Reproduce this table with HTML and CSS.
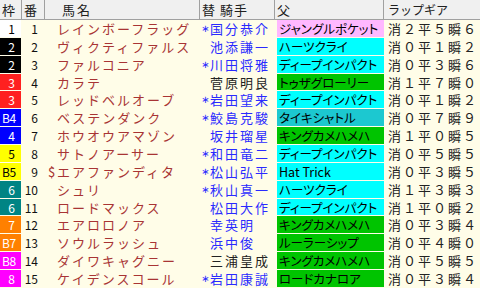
FILE: index.html
```html
<!DOCTYPE html>
<html lang="ja">
<head>
<meta charset="utf-8">
<link rel="stylesheet" href="styles.css">
</head>
<body>
<div class="table">
  <div class="row head">
    <div class="h">枠</div>
    <div class="h">番</div>
    <div class="h h-name">馬名</div>
    <div class="h h-jockey">替 騎手</div>
    <div class="h">父</div>
    <div class="h h-lap">ラップギア</div>
  </div>

  <div class="row"><div class="waku w1">1</div><div class="num">1</div><div class="name"><span class="mk"></span>レインボーフラッグ</div><div class="jockey"><span class="mk">∗</span>国分恭介</div><div class="sire s-pink"><span>ジャングルポケット</span></div><div class="lap">消２平５瞬６</div></div>
  <div class="row"><div class="waku w2">2</div><div class="num">2</div><div class="name"><span class="mk"></span>ヴィクティファルス</div><div class="jockey"><span class="mk"></span>池添謙一</div><div class="sire s-cyan"><span>ハーツクライ</span></div><div class="lap">消０平１瞬２</div></div>
  <div class="row"><div class="waku w2">2</div><div class="num">3</div><div class="name"><span class="mk"></span>ファルコニア</div><div class="jockey"><span class="mk">∗</span>川田将雅</div><div class="sire s-cyan"><span>ディープインパクト</span></div><div class="lap">消０平３瞬６</div></div>
  <div class="row"><div class="waku w3">3</div><div class="num">4</div><div class="name"><span class="mk"></span>カラテ</div><div class="jockey dark"><span class="mk"></span>菅原明良</div><div class="sire s-green"><span>トゥザグローリー</span></div><div class="lap">消１平７瞬０</div></div>
  <div class="row"><div class="waku w3">3</div><div class="num">5</div><div class="name"><span class="mk"></span>レッドベルオーブ</div><div class="jockey"><span class="mk">∗</span>岩田望来</div><div class="sire s-cyan"><span>ディープインパクト</span></div><div class="lap">消０平１瞬２</div></div>
  <div class="row"><div class="waku w4 b">B4</div><div class="num">6</div><div class="name"><span class="mk"></span>ベステンダンク</div><div class="jockey"><span class="mk">∗</span>鮫島克駿</div><div class="sire s-dcyan"><span>タイキシャトル</span></div><div class="lap">消０平７瞬９</div></div>
  <div class="row"><div class="waku w4">4</div><div class="num">7</div><div class="name"><span class="mk"></span>ホウオウアマゾン</div><div class="jockey"><span class="mk"></span>坂井瑠星</div><div class="sire s-green"><span>キングカメハメハ</span></div><div class="lap">消１平０瞬５</div></div>
  <div class="row"><div class="waku w5">5</div><div class="num">8</div><div class="name"><span class="mk"></span>サトノアーサー</div><div class="jockey"><span class="mk">∗</span>和田竜二</div><div class="sire s-cyan"><span>ディープインパクト</span></div><div class="lap">消０平５瞬５</div></div>
  <div class="row"><div class="waku w5 b">B5</div><div class="num">9</div><div class="name"><span class="mk">$</span>エアファンディタ</div><div class="jockey"><span class="mk">∗</span>松山弘平</div><div class="sire s-cyan"><span>Hat Trick</span></div><div class="lap">消０平３瞬５</div></div>
  <div class="row"><div class="waku w6">6</div><div class="num">10</div><div class="name"><span class="mk"></span>シュリ</div><div class="jockey"><span class="mk">∗</span>秋山真一</div><div class="sire s-cyan"><span>ハーツクライ</span></div><div class="lap">消１平３瞬３</div></div>
  <div class="row"><div class="waku w6">6</div><div class="num">11</div><div class="name"><span class="mk"></span>ロードマックス</div><div class="jockey"><span class="mk"></span>松田大作</div><div class="sire s-cyan"><span>ディープインパクト</span></div><div class="lap">消１平０瞬２</div></div>
  <div class="row"><div class="waku w7">7</div><div class="num">12</div><div class="name"><span class="mk"></span>エアロロノア</div><div class="jockey"><span class="mk"></span>幸英明</div><div class="sire s-green"><span>キングカメハメハ</span></div><div class="lap">消０平３瞬４</div></div>
  <div class="row"><div class="waku w7 b">B7</div><div class="num">13</div><div class="name"><span class="mk"></span>ソウルラッシュ</div><div class="jockey"><span class="mk"></span>浜中俊</div><div class="sire s-green"><span>ルーラーシップ</span></div><div class="lap">消０平４瞬０</div></div>
  <div class="row"><div class="waku w8 b">B8</div><div class="num">14</div><div class="name"><span class="mk"></span>ダイワキャグニー</div><div class="jockey dark"><span class="mk"></span>三浦皇成</div><div class="sire s-green"><span>キングカメハメハ</span></div><div class="lap">消０平５瞬５</div></div>
  <div class="row"><div class="waku w8">8</div><div class="num">15</div><div class="name"><span class="mk"></span>ケイデンスコール</div><div class="jockey"><span class="mk">∗</span>岩田康誠</div><div class="sire s-green"><span>ロードカナロア</span></div><div class="lap">消０平３瞬４</div></div>
</div>
</body>
</html>
```

FILE: styles.css
```css
html, body {
  margin: 0;
  padding: 0;
}
body {
  width: 480px;
  height: 288px;
  overflow: hidden;
  background: #fffde8;
  font-family: "Noto Sans CJK JP", "Noto Sans", sans-serif;
  font-size: 13px;
  color: #000;
}
.table {
  display: flex;
  flex-direction: column;
  height: 288px;
}
.row {
  display: grid;
  grid-template-columns: 22px 23px 155px 75px 109px 96px;
  flex: 1 1 0;
  min-height: 0;
}
.row > div {
  display: flex;
  align-items: center;
  white-space: nowrap;
  overflow: hidden;
  border-bottom: 1px solid #fffde8;
  box-sizing: border-box;
}
.head {
  flex: 0 0 20px;
  background: #f0f0f0;
}
.head > .h {
  border-bottom: 1px solid #a0a0a0;
  border-right: 1px solid #a0a0a0;
  padding-left: 2px;
  color: #202020;
  letter-spacing: 1px;
  line-height: 1;
}
.head > .h-name {
  padding-left: 17px;
  letter-spacing: 2px;
}
.head > .h-lap {
  border-right: none;
  padding-left: 4px;
  font-size: 12px;
  letter-spacing: 0;
}
.waku {
  justify-content: flex-end;
  padding-right: 6px;
  color: #fff;
  font-size: 12px;
  border-right: 1px solid #fffde8;
}
.waku.b {
  justify-content: flex-start;
  padding-left: 2px;
  letter-spacing: -0.5px;
}
.w1 { background: #fff; color: #000; }
.w2 { background: #000; }
.w3 { background: #ff2020; }
.w4 { background: #0000ff; }
.w5 { background: #ffff00; color: #000; }
.w6 { background: #008484; }
.w7 { background: #ff8000; }
.w8 { background: #ff00ff; }
.num {
  justify-content: flex-end;
  padding-right: 7px;
  font-size: 12px;
  color: #111;
}
.name {
  padding-left: 3px;
  color: #a83434;
  letter-spacing: 2px;
}
.mk {
  display: inline-block;
  width: 9px;
  flex: 0 0 9px;
  letter-spacing: 0;
}
.jockey {
  padding-left: 1px;
  color: #2a2aff;
  letter-spacing: 2px;
}
.jockey .mk {
  font-family: "DejaVu Sans", sans-serif;
  font-size: 10px;
}
.jockey.dark {
  color: #222;
}
.sire {
  margin-left: 2px;
  padding-left: 2px;
  font-size: 12.5px;
  font-feature-settings: "palt";
  color: #000;
}
.s-pink { background: #ffb8ff; }
.s-cyan { background: #00ffff; }
.s-dcyan { background: #1cc8d0; }
.s-green { background: #00c400; }
.lap {
  padding-left: 4px;
  letter-spacing: 2px;
  color: #222;
}
```
